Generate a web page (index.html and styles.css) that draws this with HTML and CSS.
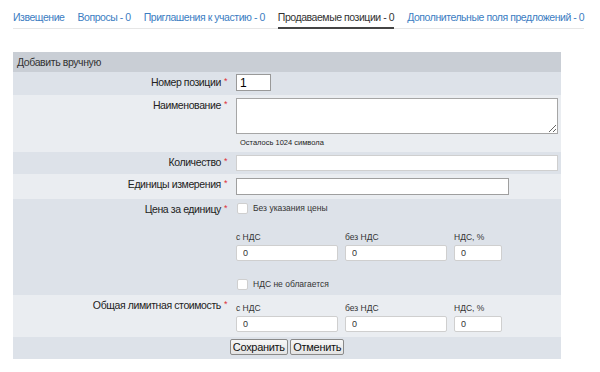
FILE: index.html
```html
<!DOCTYPE html>
<html lang="ru">
<head>
<meta charset="UTF-8" />
<meta name="viewport" content="width=device-width, initial-scale=1" />
<title>Продаваемые позиции</title>
<link rel="stylesheet" href="styles.css">
</head>
<body>
  <nav class="tabs">
    <a class="tab" href="#">Извещение</a>
    <a class="tab" href="#">Вопросы - 0</a>
    <a class="tab" href="#">Приглашения к участию - 0</a>
    <a class="tab active" href="#">Продаваемые позиции - 0</a>
    <a class="tab" href="#">Дополнительные поля предложений - 0</a>
  </nav>

  <table class="form-table">
    <tr class="head">
      <td colspan="2">Добавить вручную</td>
    </tr>
    <tr class="dark">
      <td class="label">Номер позиции<span class="req">*</span></td>
      <td class="field row-num"><input class="inp-num" type="text" value="1"></td>
    </tr>
    <tr class="light">
      <td class="label">Наименование<span class="req">*</span></td>
      <td class="field">
        <textarea class="inp-area"></textarea>
        <div class="hint">Осталось 1024 символа</div>
      </td>
    </tr>
    <tr class="dark">
      <td class="label">Количество<span class="req">*</span></td>
      <td class="field"><input class="inp-qty" type="text"></td>
    </tr>
    <tr class="light">
      <td class="label">Единицы измерения<span class="req">*</span></td>
      <td class="field row-unit"><input class="inp-unit" type="text"></td>
    </tr>
    <tr class="dark">
      <td class="label">Цена за единицу<span class="req">*</span></td>
      <td class="field price">
        <label class="check"><span class="box"></span>Без указания цены</label>
        <div class="money">
          <div class="money-col"><span class="small">с НДС</span><input class="inp-money" type="text" value="0"></div>
          <div class="money-col"><span class="small">без НДС</span><input class="inp-money" type="text" value="0"></div>
          <div class="money-col"><span class="small">НДС, %</span><input class="inp-money pct" type="text" value="0"></div>
        </div>
        <label class="check"><span class="box"></span>НДС не облагается</label>
      </td>
    </tr>
    <tr class="light">
      <td class="label">Общая лимитная стоимость<span class="req">*</span></td>
      <td class="field total">
        <div class="money">
          <div class="money-col"><span class="small">с НДС</span><input class="inp-money" type="text" value="0"></div>
          <div class="money-col"><span class="small">без НДС</span><input class="inp-money" type="text" value="0"></div>
          <div class="money-col"><span class="small">НДС, %</span><input class="inp-money pct" type="text" value="0"></div>
        </div>
      </td>
    </tr>
    <tr class="dark">
      <td class="actions" colspan="2">
        <button type="button">Сохранить</button>
        <button type="button">Отменить</button>
      </td>
    </tr>
  </table>
</body>
</html>
```

FILE: styles.css
```css
:root {
  --link: #3b7dc2;
  --head-bg: #c9ced5;
  --row-dark: #dde2e9;
  --row-light: #eaedf1;
  --req: #e0303a;
}
body {
  margin: 0;
  font-family: "Liberation Sans", Arial, sans-serif;
  color: #222;
  background: #fff;
}
.tabs {
  display: flex;
  gap: 13px;
  margin: 0 0 0 13px;
  width: 571px;
  padding-top: 10px;
  border-bottom: 1px solid #e6e6e6;
  font-size: 10.5px;
  letter-spacing: -0.45px;
}
.tab {
  color: var(--link);
  text-decoration: none;
  line-height: 14px;
  padding-bottom: 3px;
  border-bottom: 2px solid transparent;
  margin-bottom: -1px;
  white-space: nowrap;
}
.tab.active {
  color: #333;
  border-bottom-color: #444;
}
.form-table {
  margin: 23px 0 0 13px;
  width: 548px;
  border-collapse: collapse;
  border-spacing: 0;
  font-size: 10.5px;
  letter-spacing: -0.4px;
}
.form-table td {
  padding: 0;
  vertical-align: top;
}
.head td {
  background: var(--head-bg);
  height: 20px;
  padding-left: 4px;
  vertical-align: middle;
  color: #333;
}
.dark {
  background: var(--row-dark);
}
.light {
  background: var(--row-light);
}
.label {
  width: 214px;
  text-align: right;
  padding: 4px 5px 0 0 !important;
  color: #222;
  white-space: nowrap;
}
.req {
  color: var(--req);
  font-size: 9px;
  vertical-align: top;
  margin-left: 3px;
}
.field {
  padding: 2px 0 3px 4px !important;
}
.row-num {
  padding-bottom: 4px !important;
}
.row-unit {
  padding-bottom: 4px !important;
}
input, textarea {
  box-sizing: border-box;
  display: block;
  margin: 0;
  font-family: "Liberation Sans", Arial, sans-serif;
  background: #fff;
  letter-spacing: 0;
}
.inp-num {
  width: 35px;
  height: 17px;
  border: 1px solid #999;
  font-size: 12px;
  padding: 1px 3px 0;
}
.inp-area {
  width: 322px;
  height: 36px;
  margin-top: 1px;
  border: 1px solid #a6a6a6;
}
.hint {
  font-size: 7.5px;
  letter-spacing: 0;
  padding: 3px 0 0 4px;
  line-height: 12px;
  color: #222;
}
.inp-qty {
  width: 322px;
  height: 16px;
  margin-top: 1px;
  border: 1px solid #cfcfcf;
}
.inp-unit {
  width: 273px;
  height: 17px;
  margin-top: 2px;
  border: 1px solid #9f9f9f;
}
.check {
  display: flex;
  align-items: center;
  font-size: 8.5px;
  letter-spacing: 0;
  line-height: 11px;
  color: #333;
}
.box {
  width: 9px;
  height: 9px;
  border: 1px solid #cfcfcf;
  border-radius: 2px;
  background: #fff;
  margin: 0 5px 0 1px;
}
.price {
  padding: 4px 0 5px 4px !important;
}
.price .money {
  margin: 18px 0 18px;
}
.total {
  padding: 8px 0 5px 4px !important;
}
.money {
  display: flex;
  gap: 7px;
}
.money-col {
  display: flex;
  flex-direction: column;
  gap: 2px;
}
.small {
  font-size: 8.5px;
  letter-spacing: 0;
  line-height: 11px;
  color: #333;
}
.inp-money {
  width: 102px;
  height: 16px;
  border: 1px solid #cfcfcf;
  border-radius: 2px;
  font-size: 9px;
  padding: 0 6px;
  color: #333;
}
.inp-money.pct {
  width: 48px;
}
.actions {
  text-align: center;
  height: 20px;
  padding-top: 2px !important;
}
button {
  font-family: "Liberation Sans", Arial, sans-serif;
  font-size: 11px;
  letter-spacing: -0.3px;
  height: 16px;
  line-height: 14px;
  padding: 0 2px;
  border: 1px solid #8a8a8a;
  border-radius: 2px;
  background: linear-gradient(#f7f7f7, #e3e3e3);
  color: #111;
  margin: 0;
}
```
